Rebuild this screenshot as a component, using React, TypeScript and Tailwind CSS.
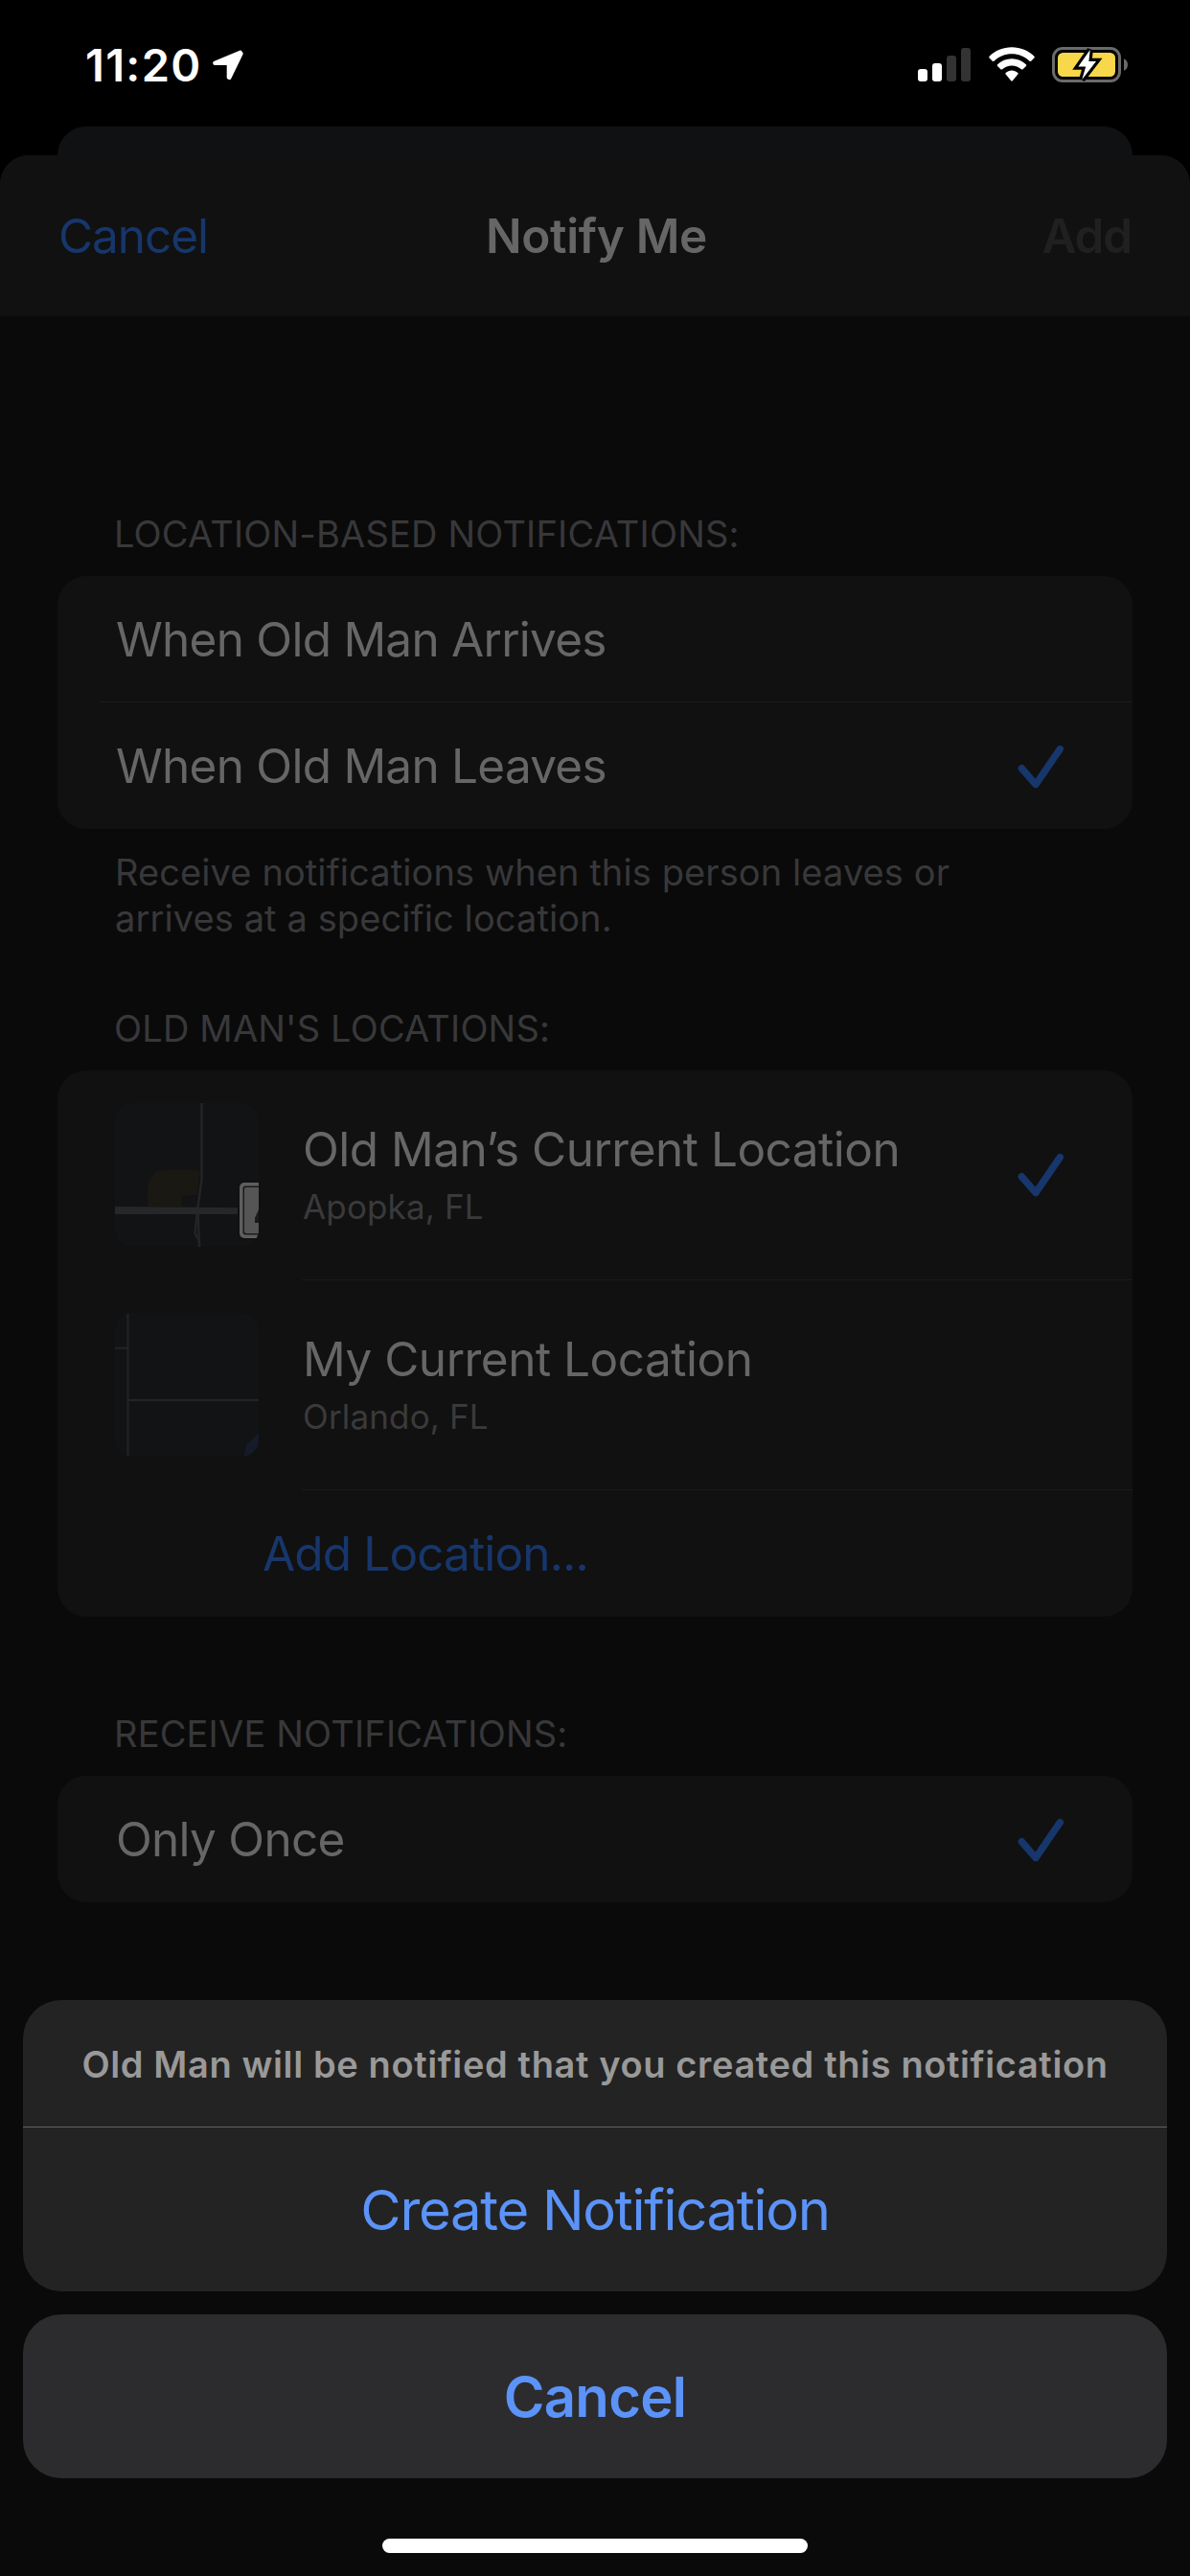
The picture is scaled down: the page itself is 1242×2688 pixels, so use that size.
import React from "react";
import clsx from "clsx";

const Check = () => (
  <svg width="48" height="46" viewBox="0 0 48 46" fill="none" className="shrink-0">
    <path
      d="M4.3 24.7L19 41.6L44.3 4.6"
      stroke="#17366b"
      strokeWidth="7.4"
      strokeLinecap="round"
      strokeLinejoin="round"
    />
  </svg>
);

const StatusBar = () => (
  <div className="h-[132px] shrink-0 flex items-start justify-between pl-[89px] pr-[64px]">
    <div className="flex items-start">
      <span className="w-[132px] mt-[38px] leading-[60px] text-[47px] font-semibold tracking-[1.300px] text-white">
        11:20
      </span>
      <svg width="34" height="34" viewBox="0 0 34 34" className="mt-[51px]">
        <path
          d="M29.8 3.2L2.800 14.6L3.1 15.2H16.8L17.4 15.8V29.9L18.6 30.400L31 5Z"
          fill="#fff"
          stroke="#fff"
          strokeWidth="3.4"
          strokeLinejoin="round"
        />
      </svg>
    </div>

    <div className="flex items-start pt-[49px]">
      {/* SIGNAL */}
      <svg width="56" height="37" viewBox="0 0 56 37">
        <rect x="0" y="23" width="10" height="13" rx="3" fill="#fff" />
        <rect x="15" y="17" width="10" height="19" rx="3" fill="#fff" />
        <rect x="30" y="9" width="10" height="27" rx="3" fill="#333" />
        <rect x="45" y="1" width="10" height="35" rx="3" fill="#333" />
      </svg>

      {/* WIFI */}
      <svg width="48" height="37" viewBox="0 0 48 37" className="ml-[17.5px]" fill="#fff">
        <path d="M24 0.3C33 0.3 41.3 3.7 47.4 9.7C47.9 10.2 47.9 10.9 47.4 11.4L44.2 14.7C43.8 15.2 43 15.2 42.5 14.7C37.5 9.9 31 7.3 24 7.3C17 7.3 10.5 9.9 5.5 14.7C5 15.2 4.2 15.2 3.8 14.7L0.6 11.4C0.1 10.9 0.1 10.2 0.6 9.7C6.7 3.7 15 0.3 24 0.3Z" />
        <path d="M24 12.3C29.7 12.3 34.9 14.5 38.9 18.2C39.4 18.7 39.4 19.4 38.9 19.9L35.6 23.2C35.2 23.7 34.4 23.7 33.9 23.2C31.2 20.8 27.7 19.4 24 19.4C20.3 19.4 16.8 20.8 14.1 23.2C13.6 23.7 12.8 23.7 12.4 23.2L9.1 19.9C8.6 19.4 8.6 18.7 9.1 18.2C13.1 14.5 18.3 12.3 24 12.3Z" />
        <path d="M24 24.5C26.4 24.5 28.6 25.4 30.3 26.9C30.8 27.3 30.8 28 30.3 28.5L24.8 35.3C24.3 35.9 23.7 35.9 23.2 35.3L17.7 28.5C17.2 28 17.2 27.3 17.7 26.9C19.4 25.4 21.6 24.5 24 24.5Z" />
      </svg>

      {/* BATTERY */}
      <svg width="80" height="37" viewBox="0 0 80 37" className="ml-[18.5px]">
        <rect x="1.5" y="1.5" width="69" height="34" rx="9.5" fill="none" stroke="#6a6a6a" strokeWidth="3" />
        <rect x="6" y="6" width="60" height="25" rx="5.5" fill="#f8d84a" />
        <path d="M75 12.5C77.7 13.2 79 15.7 79 18.6C79 21.5 77.7 24.1 75 24.8Z" fill="#6a6a6a" />
        <path
          d="M39.7 3L27.4 20.6H35.2L31.3 34L46 14.9H38.4Z"
          fill="#fff"
          stroke="#000"
          strokeWidth="6.4"
          paintOrder="stroke"
        />
      </svg>
    </div>
  </div>
);

const SectionLabel = ({ text, className }: { text: string; className?: string }) => (
  <h2
    className={clsx(
      "h-[48px] mb-[20px] pl-[59px] text-[38px] leading-[48px] tracking-[0.180px] text-[#38383a]",
      className
    )}
  >
    {text}
  </h2>
);

const OptionRow = ({ name, checked, last }: { name: string; checked?: boolean; last?: boolean }) => (
  <div className="pl-[45px]">
    <div
      className={clsx(
        "h-[132px] pl-[16px] pr-[72px] pt-px flex items-center justify-between",
        !last && "border-b border-[#1b1b1b]"
      )}
    >
      <span className="text-[49.5px] tracking-[-0.750px] text-[#666]">{name}</span>
      {checked && <Check />}
    </div>
  </div>
);

type LocationRowProps = {
  name: string;
  place: string;
  checked?: boolean;
  children: React.ReactNode;
};

const LocationRow = ({ name, place, checked, children }: LocationRowProps) => (
  <div className="h-[219px] pl-[60px] flex">
    <div className="mt-[34px] mr-[45px] size-[150px] shrink-0 rounded-[18px] overflow-hidden bg-[#111314]">
      {children}
    </div>
    <div className="flex-1 pr-[72px] flex items-center justify-between border-b border-[#1b1b1b]">
      <div className="self-start pt-[52px] pl-px">
        <p className="text-[49.5px] leading-[60px] tracking-[-0.500px] text-[#666]">{name}</p>
        <p className="mt-[9px] text-[35px] leading-[42px] tracking-[0.150px] text-[#3a3a3c]">{place}</p>
      </div>
      {checked && <Check />}
    </div>
  </div>
);

const ApopkaMap = () => (
  <svg width="150" height="150" viewBox="0 0 150 150" fill="none">
    <path d="M34 108V87C36 79 40 73 45 71C52 69.5 59 69 66 69C75 69 83 70 89 71L86 96C80 96.5 74 96.5 69.5 97V108Z" fill="#1a1813" />
    <path d="M90.5 0V80L86 112L83.5 136L88 144V150" stroke="#222425" strokeWidth="2.5" />
    <path d="M86.5 112L88 150" stroke="#222425" strokeWidth="2.5" />
    <path d="M0 108L150 109.5V116L0 116Z" fill="#252728" />
    <rect x="128" y="81" width="50" height="62" rx="7" fill="#111" />
    <rect x="130" y="83" width="50" height="58" rx="5" fill="#5e5e5e" />
    <rect x="133.5" y="86.5" width="50" height="51" rx="3" fill="#1b1b1b" />
    <rect x="135" y="88" width="50" height="48" rx="2" fill="#555" />
    <path d="M150 111L146 120V125H150Z" fill="#1b1b1b" />
  </svg>
);

const OrlandoMap = () => (
  <svg width="150" height="150" viewBox="0 0 150 150" fill="none">
    <path d="M13.5 0V150M0 36.7H13M14 91H150" stroke="#222425" strokeWidth="2" />
    <path d="M150 125L137 137.5L134.5 150H150Z" fill="#151b29" />
  </svg>
);

const ActionSheet = () => (
  <div className="absolute inset-x-0 bottom-0 h-[601px] px-[24px] flex flex-col">
    <div className="h-[304px] rounded-[40px] overflow-hidden bg-[#232323]">
      <p className="h-[133px] pt-[2px] flex items-center justify-center border-b border-[#606060] text-[38px] font-semibold tracking-[0.620px] text-[#999]">
        Old Man will be notified that you created this notification
      </p>
      <button className="w-full h-[171px] pt-px text-[58px] tracking-[-1.300px] text-[#5b93f8]">
        Create Notification
      </button>
    </div>
    <button className="mt-[24px] h-[171px] pt-px rounded-[40px] bg-[#2c2c2e] text-[58px] font-semibold tracking-[-0.720px] text-[#5b93f8]">
      Cancel
    </button>
    <div className="mt-[63px] mx-auto w-[444px] h-[15px] rounded-full bg-white" />
  </div>
);

const App = () => {
  return (
    <div className="relative w-[1242px] h-[2688px] overflow-hidden flex flex-col bg-black font-['Inter',sans-serif]">
      <StatusBar />

      {/* SHEET BEHIND */}
      <div className="mx-[60px] h-[30px] shrink-0 rounded-t-[30px] bg-[#101113]" />

      <div className="flex-1 rounded-t-[30px] overflow-hidden bg-[#0a0a0a]">
        {/* NAV */}
        <div className="h-[168px] px-[61px] grid grid-cols-3 items-center bg-[#111] text-[49.5px]">
          <span className="tracking-[-1.060px] text-[#17366b]">Cancel</span>
          <span className="pl-[3px] text-center font-semibold tracking-[-0.330px] text-[#666]">Notify Me</span>
          <span className="text-right font-semibold tracking-[-1.200px] text-[#202020]">Add</span>
        </div>

        <div className="px-[60px]">
          <SectionLabel text="LOCATION-BASED NOTIFICATIONS:" className="mt-[203px]" />
          <div className="rounded-[30px] bg-[#111]">
            <OptionRow name="When Old Man Arrives" />
            <OptionRow name="When Old Man Leaves" checked last />
          </div>
          <p className="mt-[21px] pl-[60px] text-[38px] leading-[48px] tracking-[0.100px] text-[#38383a]">
            Receive notifications when this person leaves or
            <br />
            arrives at a specific location.
          </p>

          <SectionLabel text="OLD MAN'S LOCATIONS:" className="mt-[67px]" />
          <div className="rounded-[30px] bg-[#111]">
            <LocationRow name="Old Man’s Current Location" place="Apopka, FL" checked>
              <ApopkaMap />
            </LocationRow>
            <LocationRow name="My Current Location" place="Orlando, FL">
              <OrlandoMap />
            </LocationRow>
            <div className="h-[132px] pl-[214px] pt-px flex items-center text-[49.5px] tracking-[-0.860px] text-[#17366b]">
              Add Location...
            </div>
          </div>

          <SectionLabel text="RECEIVE NOTIFICATIONS:" className="mt-[98px]" />
          <div className="rounded-[30px] bg-[#111]">
            <OptionRow name="Only Once" checked last />
          </div>
        </div>
      </div>

      <ActionSheet />
    </div>
  );
};

export default App;
